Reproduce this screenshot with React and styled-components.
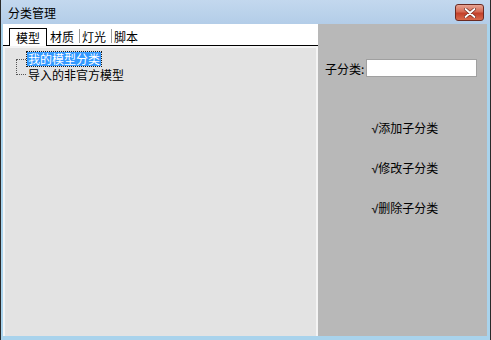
import React from 'react';
import styled, { createGlobalStyle } from 'styled-components';

const GlobalStyle = createGlobalStyle`
  html, body {
    margin: 0;
    padding: 0;
    background: #ffffff;
  }
  body {
    font-family: "Liberation Sans", "Noto Sans CJK SC", sans-serif;
    font-size: 12px;
  }
`;

const Window = styled.div`
  width: 491px;
  height: 340px;
  box-sizing: border-box;
  display: flex;
  flex-direction: column;
  border-left: 1px solid #2a2a2a;
  border-right: 1px solid #2a2a2a;
  background: #a9d3ec;
  overflow: hidden;
`;

const TitleBar = styled.div`
  height: 24px;
  flex: none;
  display: flex;
  align-items: center;
  justify-content: space-between;
  padding: 0 6px 0 7px;
  background: linear-gradient(#c3d8ee, #b3cde8);
  color: #000;
  font-family: "Noto Sans CJK SC", sans-serif;
  font-size: 12px;
`;

const CloseButton = styled.div`
  width: 29px;
  height: 17px;
  align-self: flex-start;
  margin-top: 4px;
  border: 1px solid #6b2a22;
  border-radius: 3px;
  box-sizing: border-box;
  background: linear-gradient(#e8a493 0%, #d56b55 45%, #c3402a 55%, #d96a4c 100%);
  display: flex;
  align-items: center;
  justify-content: center;
`;

const Body = styled.div`
  flex: 1;
  display: flex;
  padding: 0 3px 4px 2px;
  min-height: 0;
`;

const LeftPane = styled.div`
  width: 315px;
  display: flex;
  flex-direction: column;
  background: #f4f4f4;
`;

const TabBar = styled.div`
  height: 21px;
  flex: none;
  display: flex;
  align-items: flex-end;
  padding-left: 6px;
  border-bottom: 1px solid #000;
  background: #ffffff;
  font-family: "Noto Sans CJK SC", sans-serif;
  font-size: 12px;
`;

const Tab = styled.div`
  box-sizing: border-box;
  line-height: 17px;
  height: ${p => (p.$active ? '18px' : '17px')};
  padding: ${p => (p.$active ? '0 6px' : '0 5px 0 2px')};
  border: ${p => (p.$active ? '1px solid #000' : 'none')};
  border-bottom: none;
  margin-bottom: ${p => (p.$active ? '-1px' : '0')};
  margin-right: ${p => (p.$active ? '1px' : '0')};
  background: #fff;
`;

const TabSep = styled.div`
  width: 1px;
  height: 14px;
  background: #9a9a9a;
  margin: 0 0 2px 0;
`;

const TreeArea = styled.div`
  flex: 1;
  margin: 2px 2px 0 2px;
  background: #e3e3e3;
  padding: 3px 0 0 11px;
  font-family: "Noto Sans CJK SC", sans-serif;
  font-size: 12px;
`;

const TreeRow = styled.div`
  height: 16px;
  display: flex;
  align-items: center;
`;

const ConnectorWrap = styled.div`
  width: 10px;
  height: 16px;
  display: flex;
  flex-direction: column;
  justify-content: ${p => (p.$first ? 'flex-end' : 'flex-start')};
  flex: none;
`;

const Connector = styled.div`
  width: 10px;
  height: ${p => (p.$first ? '8px' : '16px')};
  margin-top: ${p => (p.$first ? '0' : '-8px')};
  box-sizing: border-box;
  border-left: 1px dotted #555;
  border-top: ${p => (p.$first ? '1px dotted #555' : 'none')};
  border-bottom: ${p => (p.$first ? 'none' : '1px dotted #555')};
`;

const Label = styled.span`
  padding: 0 1px;
  line-height: 14px;
  margin-left: 1px;
  color: ${p => (p.$selected ? '#fff' : '#000')};
  background: ${p => (p.$selected ? '#3399ff' : 'transparent')};
  outline: ${p => (p.$selected ? '1px dotted #1a1a1a' : 'none')};
`;

const RightPane = styled.div`
  flex: 1;
  background: #b8b8b8;
  display: flex;
  flex-direction: column;
  font-family: "Noto Sans CJK SC", sans-serif;
  font-size: 12px;
  padding: 35px 8px 0 7px;
`;

const FieldRow = styled.div`
  display: flex;
  align-items: center;
  gap: 2px;
`;

const TextInput = styled.input`
  width: 111px;
  height: 18px;
  box-sizing: border-box;
  border: 1px solid #a0a0a0;
  background: #fff;
  padding: 0 2px;
  margin: 0;
  outline: none;
`;

const ActionList = styled.div`
  display: flex;
  flex-direction: column;
  align-items: center;
  gap: 25px;
  margin-top: 45px;
  padding-left: 6px;
`;

const Action = styled.div`
  height: 15px;
  line-height: 15px;
  color: #000;
  font-family: "Liberation Sans", "Noto Sans CJK SC", sans-serif;
`;

const Check = styled.span`
  font-weight: bold;
  color: #222;
`;

const CloseIcon = () => (
  <svg width="12" height="10" viewBox="0 0 12 10">
    <path d="M1.5 1 L10.5 9 M10.5 1 L1.5 9" stroke="#6e2a1e" strokeWidth="3.2" strokeLinecap="round" />
    <path d="M1.5 1 L10.5 9 M10.5 1 L1.5 9" stroke="#fff" strokeWidth="1.8" strokeLinecap="round" />
  </svg>
);

const actions = ['添加子分类', '修改子分类', '删除子分类'];

export default function App() {
  return (
    <>
      <GlobalStyle />
      <Window>
        <TitleBar>
          <span>分类管理</span>
          <CloseButton>
            <CloseIcon />
          </CloseButton>
        </TitleBar>
        <Body>
          <LeftPane>
            <TabBar>
              <Tab $active>模型</Tab>
              <Tab>材质</Tab>
              <TabSep />
              <Tab>灯光</Tab>
              <TabSep />
              <Tab>脚本</Tab>
            </TabBar>
            <TreeArea>
              <TreeRow>
                <ConnectorWrap $first>
                  <Connector $first />
                </ConnectorWrap>
                <Label $selected>我的模型分类</Label>
              </TreeRow>
              <TreeRow>
                <ConnectorWrap>
                  <Connector />
                </ConnectorWrap>
                <Label>导入的非官方模型</Label>
              </TreeRow>
            </TreeArea>
          </LeftPane>
          <RightPane>
            <FieldRow>
              <span>子分类:</span>
              <TextInput />
            </FieldRow>
            <ActionList>
              {actions.map(a => (
                <Action key={a}>
                  <Check>√</Check>{a}
                </Action>
              ))}
            </ActionList>
          </RightPane>
        </Body>
      </Window>
    </>
  );
}
